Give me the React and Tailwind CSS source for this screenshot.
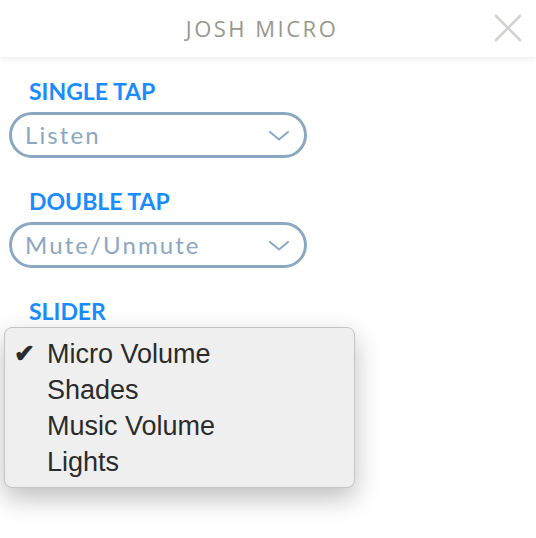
const options = ["Micro Volume", "Shades", "Music Volume", "Lights"];

// Pill-shaped select box
const Select = ({ value }) => (
  <div className="mx-[9px] w-[298px] h-[46px] rounded-full border-[3px] border-[#8aa8c2] flex items-center justify-between pl-[13px] pr-[15px]">
    <span className="text-[24px] text-[#8aa8c2] tracking-[2.1px] font-['Lato',sans-serif]">
      {value}
    </span>
    <svg width="20" height="10" viewBox="0 0 20 10" className="mt-[2px]">
      <polyline points="1,1 10,8.5 19,1" fill="none" stroke="#8aa8c2" strokeWidth="2" strokeLinecap="round" strokeLinejoin="round" />
    </svg>
  </div>
);

const Label = ({ children }) => (
  <div className="pl-[29px] text-[23px] leading-none font-bold text-[#1a8cff] font-['Lato',sans-serif]">
    {children}
  </div>
);

const App = () => {
  return (
    <div className="w-[536px] h-[538px] bg-white relative overflow-hidden font-['Lato',sans-serif]">
      {/* Header */}
      <div className="h-[57px] flex items-center justify-center relative shadow-[0_2px_6px_rgba(0,0,0,0.08)]">
        <h1 className="text-[22px] tracking-[2.5px] text-[#97978f] font-['Open_Sans',sans-serif] mr-[12px]">
          JOSH MICRO
        </h1>
        <svg width="28" height="28" viewBox="0 0 28 28" className="absolute right-[14px] top-[14px]">
          <path d="M2 2 L26 26 M26 2 L2 26" stroke="#d2d2cd" strokeWidth="2.6" strokeLinecap="round" />
        </svg>
      </div>

      {/* Form */}
      <div className="pt-[23px]">
        <Label>SINGLE TAP</Label>
        <div className="mt-[9px]">
          <Select value="Listen" />
        </div>
        <div className="mt-[32px]">
          <Label>DOUBLE TAP</Label>
        </div>
        <div className="mt-[9px]">
          <Select value="Mute/Unmute" />
        </div>
        <div className="mt-[32px]">
          <Label>SLIDER</Label>
        </div>
      </div>

      {/* Open native-style menu */}
      <div className="absolute left-[4px] top-[327px] w-[351px] h-[161px] rounded-[8px] bg-[#efefef] border border-[#c4c4c4] shadow-[0_10px_26px_rgba(0,0,0,0.26)] py-[8px] font-['Liberation_Sans',sans-serif]">
        {options.map((opt, i) => (
          <div key={opt} className="h-[36px] flex items-center text-[27px] text-[#2b2b2b]">
            <span className="w-[42px] pl-[9px] text-[25px] font-bold">{i === 0 ? "✔" : ""}</span>
            {opt}
          </div>
        ))}
      </div>
    </div>
  );
};

export default App;
